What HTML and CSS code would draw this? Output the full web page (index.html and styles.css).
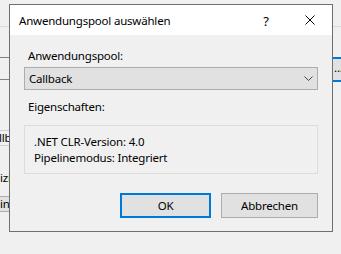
FILE: index.html
```html
<!DOCTYPE html>
<html lang="de">
<head>
    <meta charset="UTF-8">
    <title>Anwendungspool auswählen</title>
    <link rel="stylesheet" href="styles.css">
</head>
<body>
    <!-- Hintergrund: Reste des Hauptfensters links und rechts -->
    <div class="backdrop">
        <div class="strip left">
            <div class="rule light"></div>
            <div class="rule dark r1"></div>
            <div class="rule dark r2"></div>
            <div class="cell boxed">llb</div>
            <div class="cell plain">izi</div>
            <div class="cell filled">in</div>
        </div>
        <div class="strip right">
            <div class="rule light"></div>
            <div class="picker">...</div>
        </div>
    </div>

    <div class="dialog">
        <div class="titlebar">
            <span class="title">Anwendungspool auswählen</span>
            <span class="tbtn help">?</span>
            <span class="tbtn close">
                <svg width="10" height="10" viewBox="0 0 10 10">
                    <path d="M0.5 0.5 L9.5 9.5 M9.5 0.5 L0.5 9.5" stroke="#000" stroke-width="1" fill="none"/>
                </svg>
            </span>
        </div>
        <div class="content">
            <div class="label first">Anwendungspool:</div>
            <div class="combo">
                <span>Callback</span>
                <svg width="9" height="5" viewBox="0 0 9 5">
                    <path d="M0.5 0.5 L4.5 4.5 L8.5 0.5" stroke="#444" stroke-width="1" fill="none"/>
                </svg>
            </div>
            <div class="label props">Eigenschaften:</div>
            <div class="group">
                <div>.NET CLR-Version: 4.0</div>
                <div>Pipelinemodus: Integriert</div>
            </div>
            <div class="buttons">
                <div class="btn default">OK</div>
                <div class="btn cancel">Abbrechen</div>
            </div>
        </div>
    </div>
</body>
</html>
```

FILE: styles.css
```css
html,body{
    height: 100%;
}
body{
    margin: 0;
    background-color: #f0f0f0;
    font-family: "Noto Sans", "Open Sans", sans-serif;
    font-size: 11.5px;
    letter-spacing: -0.2px;
    line-height: 16px;
    color: #000;
    overflow: hidden;
    position: relative;
}
.backdrop{
    display: flex;
    justify-content: space-between;
    height: 100%;
}
.strip{
    width: 9px;
    overflow: hidden;
    white-space: nowrap;
}
.strip.right{
    width: 8px;
}
.rule{
    height: 1px;
}
.rule.light{
    margin-top: 26px;
    background: #dadada;
}
.rule.dark{
    background: #828282;
}
.r1{
    margin-top: 30px;
}
.r2{
    margin-top: 21px;
}
.cell{
    height: 14px;
    line-height: 14px;
}
.cell.boxed{
    margin-top: 50px;
    border-top: 1px solid #d0d0d0;
    border-bottom: 1px solid #d0d0d0;
    text-indent: -1px;
}
.cell.plain{
    margin-top: 25px;
}
.cell.filled{
    margin-top: 11px;
    background: #e1e1e1;
    border-top: 1px solid #adadad;
    border-bottom: 1px solid #adadad;
}
.picker{
    margin-top: 30px;
    height: 21px;
    line-height: 17px;
    background: #e1e1e1;
    border-top: 2px solid #0078d7;
    border-bottom: 2px solid #0078d7;
    padding-left: 1px;
}

/* Dialog liegt über dem Hauptfenster */
.dialog{
    position: absolute;
    left: 9px;
    top: 4px;
    width: 322px;
    height: 226px;
    border: 1px solid #6f6f6f;
    background: #f0f0f0;
}
.titlebar{
    height: 30px;
    background: #fff;
    display: flex;
    align-items: center;
}
.title{
    padding-left: 9px;
    padding-top: 2px;
    flex: 1;
}
.tbtn{
    width: 44px;
    height: 30px;
    display: flex;
    justify-content: center;
    align-items: center;
}
.help{
    font-size: 13px;
    padding-top: 1px;
}
.content{
    padding: 13px 14px 0 14px;
}
.label{
    padding-left: 4px;
}
.combo{
    margin-top: 3px;
    height: 21px;
    border: 1px solid #adadad;
    background: #e1e1e1;
    display: flex;
    align-items: center;
    justify-content: space-between;
    padding: 0 4px 0 4px;
}
.props{
    margin-top: 9px;
}
.group{
    margin-top: 10px;
    height: 32px;
    border: 1px solid #dcdcdc;
    padding: 8px 9px 7px 9px;
}
.buttons{
    margin-top: 19px;
    display: flex;
    justify-content: flex-end;
    gap: 10px;
}
.btn{
    height: 23px;
    line-height: 23px;
    text-align: center;
    background: #e1e1e1;
    border: 1px solid #adadad;
}
.btn.default{
    width: 87px;
    height: 21px;
    line-height: 21px;
    border: 2px solid #0078d7;
}
.btn.cancel{
    width: 95px;
}
```
